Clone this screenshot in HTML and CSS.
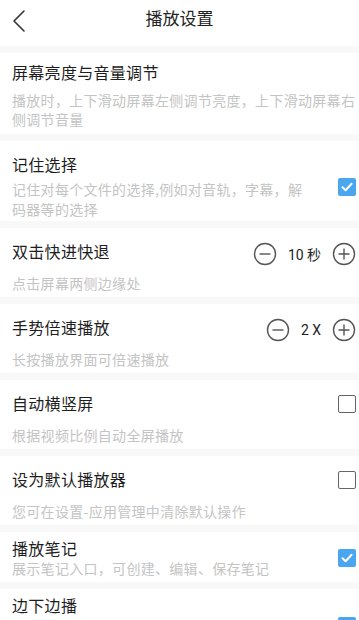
FILE: index.html
```html
<!DOCTYPE html>
<html lang="zh-CN">
<head>
<meta charset="utf-8">
<link rel="stylesheet" href="styles.css">
</head>
<body>
<div class="page">
  <header class="header">
    <svg class="back" width="16" height="24" viewBox="0 0 16 24"><path d="M13 2 L3 12 L13 22" fill="none" stroke="#333" stroke-width="1.6" stroke-linecap="round" stroke-linejoin="round"/></svg>
    <div class="header-title">播放设置</div>
  </header>
  <div class="sep"></div>

  <div class="row row-a">
    <div class="text">
      <div class="title">屏幕亮度与音量调节</div>
      <div class="desc">播放时，上下滑动屏幕左侧调节亮度，上下滑动屏幕右侧调节音量</div>
    </div>
  </div>
  <div class="sep"></div>

  <div class="row row-b">
    <div class="text">
      <div class="title">记住选择</div>
      <div class="desc desc-narrow">记住对每个文件的选择,例如对音轨，字幕，解码器等的选择</div>
    </div>
    <div class="check on ctrl-b"><svg width="18" height="18" viewBox="0 0 18 18"><path d="M4.5 9.2 L7.6 12.2 L13.6 5.8" fill="none" stroke="#fff" stroke-width="2" stroke-linecap="round" stroke-linejoin="round"/></svg></div>
  </div>
  <div class="sep"></div>

  <div class="row row-c">
    <div class="text">
      <div class="title">双击快进快退</div>
      <div class="desc">点击屏幕两侧边缘处</div>
    </div>
    <div class="stepper ctrl-c">
      <svg class="circ" width="24" height="24" viewBox="0 0 24 24"><circle cx="12" cy="12" r="10.5" fill="none" stroke="#555" stroke-width="1.4"/><path d="M6.5 12 H17.5" stroke="#555" stroke-width="1.4"/></svg>
      <span class="val val-wide">10 秒</span>
      <svg class="circ" width="24" height="24" viewBox="0 0 24 24"><circle cx="12" cy="12" r="10.5" fill="none" stroke="#555" stroke-width="1.4"/><path d="M6.5 12 H17.5 M12 6.5 V17.5" stroke="#555" stroke-width="1.4"/></svg>
    </div>
  </div>
  <div class="sep"></div>

  <div class="row row-c">
    <div class="text">
      <div class="title">手势倍速播放</div>
      <div class="desc">长按播放界面可倍速播放</div>
    </div>
    <div class="stepper ctrl-c">
      <svg class="circ" width="24" height="24" viewBox="0 0 24 24"><circle cx="12" cy="12" r="10.5" fill="none" stroke="#555" stroke-width="1.4"/><path d="M6.5 12 H17.5" stroke="#555" stroke-width="1.4"/></svg>
      <span class="val">2 X</span>
      <svg class="circ" width="24" height="24" viewBox="0 0 24 24"><circle cx="12" cy="12" r="10.5" fill="none" stroke="#555" stroke-width="1.4"/><path d="M6.5 12 H17.5 M12 6.5 V17.5" stroke="#555" stroke-width="1.4"/></svg>
    </div>
  </div>
  <div class="sep"></div>

  <div class="row row-c">
    <div class="text">
      <div class="title">自动横竖屏</div>
      <div class="desc">根据视频比例自动全屏播放</div>
    </div>
    <div class="check off ctrl-c"></div>
  </div>
  <div class="sep"></div>

  <div class="row row-c">
    <div class="text">
      <div class="title">设为默认播放器</div>
      <div class="desc">您可在设置-应用管理中清除默认操作</div>
    </div>
    <div class="check off ctrl-c"></div>
  </div>
  <div class="sep"></div>

  <div class="row row-d">
    <div class="text">
      <div class="title">播放笔记</div>
      <div class="desc">展示笔记入口，可创建、编辑、保存笔记</div>
    </div>
    <div class="check on ctrl-d"><svg width="18" height="18" viewBox="0 0 18 18"><path d="M4.5 9.2 L7.6 12.2 L13.6 5.8" fill="none" stroke="#fff" stroke-width="2" stroke-linecap="round" stroke-linejoin="round"/></svg></div>
  </div>
  <div class="sep"></div>

  <div class="row row-d">
    <div class="text">
      <div class="title">边下边播</div>
    </div>
    <div class="check on ctrl-e"><svg width="18" height="18" viewBox="0 0 18 18"><path d="M4.5 9.2 L7.6 12.2 L13.6 5.8" fill="none" stroke="#fff" stroke-width="2" stroke-linecap="round" stroke-linejoin="round"/></svg></div>
  </div>
</div>
</body>
</html>
```

FILE: styles.css
```css
html, body {
  margin: 0;
  padding: 0;
  background: #fff;
}
body {
  font-family: "Noto Sans CJK SC", "Noto Sans", sans-serif;
  color: #222;
  overflow: hidden;
}
.page {
  width: 359px;
  height: 620px;
  overflow: hidden;
}
.header {
  height: 46px;
  position: relative;
  display: flex;
  align-items: center;
  justify-content: center;
}
.back {
  position: absolute;
  left: 11px;
  top: 9px;
}
.header-title {
  font-size: 17px;
  line-height: 24px;
  margin-top: -10px;
  color: #222;
}
.sep {
  height: 7px;
  background: #f8f8f8;
}
.row {
  display: flex;
  align-items: flex-start;
  padding: 12px 3px 3px 12px;
}
.text {
  flex: 1;
  min-width: 0;
}
.title {
  font-size: 16px;
  line-height: 22px;
  letter-spacing: 0.3px;
  color: #1e1e1e;
}
.desc {
  font-size: 14px;
  line-height: 20px;
  letter-spacing: 0.3px;
  color: #c4c4c4;
}
.desc-narrow {
  max-width: 296px;
}
.row-a {
  padding-top: 8px;
  padding-bottom: 5px;
}
.row-a .desc {
  margin-top: 8px;
  line-height: 19px;
}
.row-b {
  padding-bottom: 2px;
}
.row-b .desc {
  margin-top: 4px;
}
.row-c {
  padding-bottom: 4px;
}
.row-c .desc {
  margin-top: 11px;
}
.row-d {
  padding-top: 5px;
  padding-bottom: 4px;
}
.row-d .desc {
  margin-top: -1px;
}
.check {
  width: 18px;
  height: 18px;
  box-sizing: border-box;
  border-radius: 2px;
  flex: none;
}
.check.on {
  background: #4aa6ef;
}
.check.off {
  border: 1.6px solid #666;
}
.check svg {
  display: block;
}
.ctrl-b { margin-top: 25px; }
.ctrl-c { margin-top: 3px; }
.ctrl-d { margin-top: 12px; }
.ctrl-e { margin-top: 23px; }
.stepper {
  display: flex;
  align-items: center;
  height: 22px;
}
.circ {
  display: block;
  flex: none;
}
.val {
  font-family: "Roboto", "Noto Sans CJK SC", sans-serif;
  font-size: 14px;
  color: #222;
  width: 42px;
  text-align: center;
}
.val-wide {
  width: 55px;
}
```
